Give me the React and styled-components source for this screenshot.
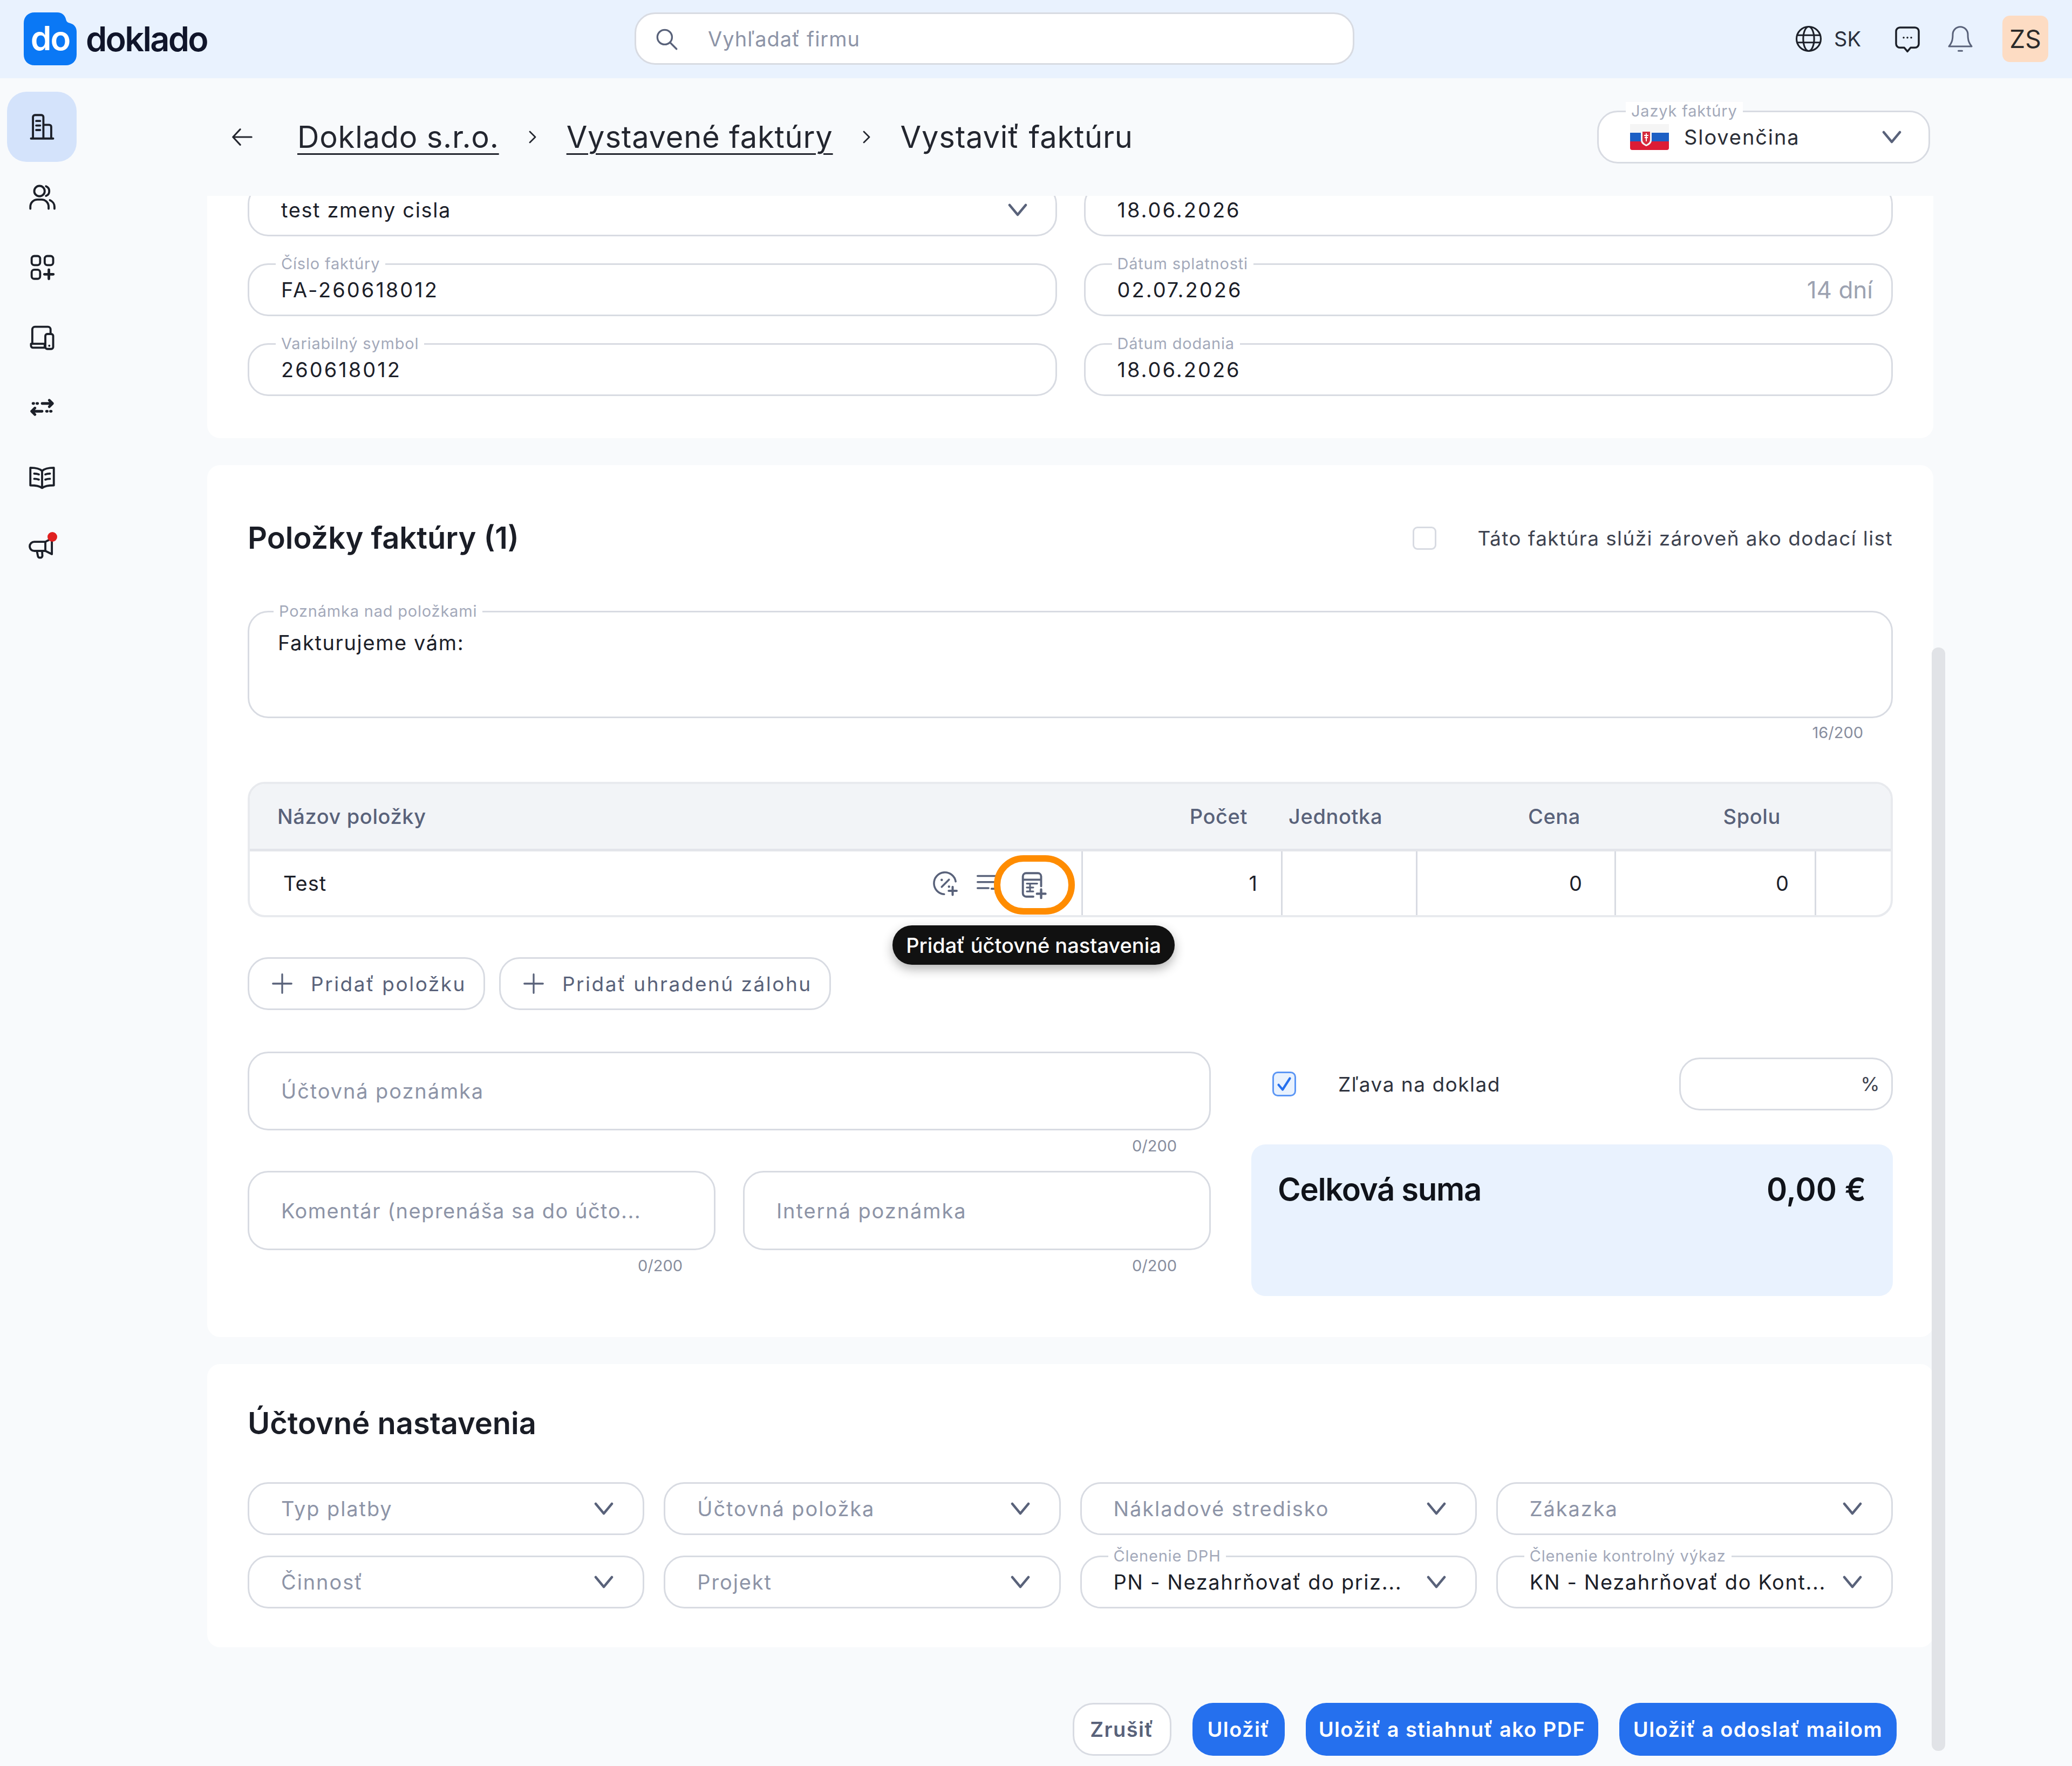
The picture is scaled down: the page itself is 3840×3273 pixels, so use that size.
import styled, { createGlobalStyle } from 'styled-components';

const colors = {
  page: '#f8fafc',
  tint: '#e9f2fe',
  border: '#d8dbe2',
  text: '#1c2029',
  muted: '#59627a',
  placeholder: '#8d94a7',
  label: '#a3a9ba',
  blue: '#2570ee',
};

const GlobalStyle = createGlobalStyle`
  html, body {
    margin: 0;
    background: ${colors.page};
    font-family: 'Inter', 'Noto Sans', sans-serif;
    color: ${colors.text};
  }
  * {
    box-sizing: border-box;
  }
`;

const Page = styled.div`
  position: relative;
  width: 3840px;
  height: 3273px;
  overflow: hidden;
  background: ${colors.page};
`;

const Header = styled.header`
  display: flex;
  align-items: center;
  height: 145px;
  padding: 0 44px 2px;
  background: ${colors.tint};
`;

const LogoWrap = styled.div`
  display: flex;
  align-items: center;
  gap: 17px;
  width: 1132px;
`;

const LogoMark = styled.div`
  position: relative;
  display: flex;
  align-items: center;
  justify-content: center;
  width: 98px;
  height: 98px;
  color: #ffffff;
  font-size: 62px;
  font-weight: 600;
  letter-spacing: -2px;
  & > svg {
    position: absolute;
    inset: 0;
  }
  & > span {
    position: relative;
    top: -1px;
  }
`;

const LogoText = styled.span`
  font-size: 63px;
  font-weight: 600;
  letter-spacing: -2.7px;
  color: #10152a;
`;

const Search = styled.div`
  display: flex;
  align-items: center;
  width: 1334px;
  height: 97px;
  padding-left: 31px;
  gap: 52px;
  background: #ffffff;
  border: 3px solid ${colors.border};
  border-radius: 38px;
  font-size: 38px;
  letter-spacing: 1px;
  color: ${colors.placeholder};
`;

const HeaderRight = styled.div`
  display: flex;
  align-items: center;
  margin-left: auto;
`;

const LangText = styled.span`
  margin: 0 58px 0 20px;
  font-size: 38px;
  color: #2a2f3c;
`;

const BellSlot = styled.div`
  display: flex;
  margin-left: 42px;
`;

const Avatar = styled.div`
  display: flex;
  align-items: center;
  justify-content: center;
  width: 85px;
  height: 86px;
  margin-left: 50px;
  background: #fddcc3;
  border-radius: 14px;
  font-size: 46px;
  color: #2a2a2a;
`;

const Body = styled.div`
  display: flex;
`;

const Sidebar = styled.nav`
  display: flex;
  flex-direction: column;
  flex: none;
  width: 155px;
  padding: 25px 0 0 13px;
`;

const SideItem = styled.div`
  position: relative;
  display: flex;
  align-items: center;
  justify-content: center;
  width: 129px;
  height: 130px;
  border-radius: 36px;
  background: ${({ $active }) => ($active ? '#d4e3fb' : 'transparent')};
  color: #1c2029;
`;

const RedDot = styled.span`
  position: absolute;
  top: 36px;
  left: 75px;
  width: 18px;
  height: 18px;
  border-radius: 50%;
  background: #e02020;
`;

const Main = styled.main`
  flex: 1;
  padding-left: 229px;
  padding-right: 257px;
`;

const TopBar = styled.div`
  display: flex;
  align-items: center;
  height: 218px;
  padding-left: 42px;
  font-size: 56px;
  color: #23262f;
`;

const BackIcon = styled.div`
  display: flex;
  width: 125px;
`;

const CrumbLink = styled.a`
  text-decoration: underline;
  text-decoration-thickness: 3px;
  text-underline-offset: 10px;
  letter-spacing: 0.8px;
`;

const CrumbSep = styled.span`
  display: flex;
  justify-content: center;
  width: 125px;
`;

const CrumbCurrent = styled.span`
  letter-spacing: 0.8px;
`;

const Card = styled.section`
  margin-bottom: 50px;
  padding: ${({ $pad }) => $pad};
  background: #ffffff;
  border-radius: 24px;
`;

const TopCard = styled(Card)`
  height: 449px;
  overflow: hidden;
  border-radius: 0 0 24px 24px;
`;

const TopGrid = styled.div`
  display: grid;
  grid-template-columns: repeat(2, 1fr);
  gap: 50px;
  margin-top: -23px;
`;

const Field = styled.div`
  position: relative;
  display: flex;
  justify-content: ${({ $top }) => ($top ? 'flex-start' : 'space-between')};
  align-items: ${({ $top }) => ($top ? 'flex-start' : 'center')};
  height: ${({ $h }) => $h || 98}px;
  padding-top: ${({ $top }) => ($top ? 33 : 0)}px;
  padding-left: ${({ $indent }) => $indent || 59}px;
  padding-right: ${({ $right }) => $right || 34}px;
  background: #ffffff;
  border: 3px solid ${colors.border};
  border-radius: 38px;
`;

const FieldLabel = styled.label`
  position: absolute;
  top: -19px;
  left: ${({ $indent }) => ($indent || 59) - 10}px;
  padding: 0 10px;
  background: #ffffff;
  font-size: 29px;
  line-height: 34px;
  letter-spacing: 0.8px;
  color: ${colors.label};
`;

const Value = styled.span`
  font-size: 38px;
  letter-spacing: ${({ $num }) => ($num ? 3 : 1.6)}px;
  white-space: nowrap;
  color: ${colors.text};
`;

const Placeholder = styled(Value)`
  letter-spacing: ${({ $tight }) => ($tight ? 1.5 : 1.9)}px;
  color: ${colors.placeholder};
`;

const DueHint = styled.span`
  font-size: 44px;
  color: #9ca2b1;
`;

const SectionHead = styled.div`
  display: flex;
  align-items: center;
  justify-content: space-between;
  height: 100px;
`;

const SectionTitle = styled.h2`
  margin: 0;
  font-size: 56px;
  font-weight: 600;
  color: #1a1d26;
`;

const CheckRow = styled.label`
  display: flex;
  align-items: center;
  gap: 76px;
  font-size: 37px;
  letter-spacing: 1.4px;
  color: #3e4350;
`;

const EmptyBox = styled.span`
  width: 44px;
  height: 43px;
  border: 3px solid ${colors.border};
  border-radius: 9px;
`;

const TickBox = styled.span`
  display: flex;
  align-items: center;
  justify-content: center;
  width: 44px;
  height: 46px;
  background: ${colors.tint};
  border: 3px solid #5b96f5;
  border-radius: 10px;
  color: ${colors.blue};
`;

const NoteSpacer = styled.div`
  height: 85px;
`;

const Counter = styled.div`
  height: 34px;
  margin: ${({ $m }) => $m || '10px 0 0'};
  padding-right: ${({ $r }) => $r}px;
  font-size: 29px;
  line-height: 34px;
  text-align: right;
  color: #878d9e;
`;

const TableWrap = styled.div`
  position: relative;
  margin-top: 74px;
`;

const Table = styled.div`
  background: #ffffff;
  border: 4px solid #e8eaee;
  border-radius: 32px;
  overflow: hidden;
`;

const TableGrid = styled.div`
  display: grid;
  grid-template-columns: 1544px 370px 250px 368px 371px 1fr;
  align-items: stretch;
`;

const HeadRow = styled(TableGrid)`
  height: 125px;
  background: #f2f4f7;
  border-bottom: 5px solid #e3e5ea;
`;

const HeadCell = styled.div`
  display: flex;
  align-items: center;
  justify-content: ${({ $left }) => ($left ? 'flex-start' : 'flex-end')};
  padding: ${({ $pad }) => $pad};
  font-size: 38px;
  font-weight: 500;
  letter-spacing: 0.6px;
  color: ${colors.muted};
`;

const BodyRow = styled(TableGrid)`
  height: 118px;
`;

const NameCell = styled.div`
  position: relative;
  display: flex;
  align-items: center;
  padding: 0 145px 0 62px;
  border-right: 3px solid ${colors.border};
  font-size: 38px;
  letter-spacing: 1px;
`;

const RowIcons = styled.div`
  display: flex;
  align-items: center;
  gap: 26px;
  margin-left: auto;
  color: ${colors.muted};
`;

const Highlight = styled.div`
  position: absolute;
  top: 7px;
  right: 12px;
  display: flex;
  align-items: center;
  justify-content: center;
  width: 150px;
  height: 110px;
  padding-right: 5px;
  background: #ffffff;
  border: 12px solid #ff8c00;
  border-radius: 56px;
  color: ${colors.muted};
`;

const NumCell = styled.div`
  display: flex;
  align-items: center;
  justify-content: flex-end;
  padding-right: ${({ $r }) => $r || 0}px;
  border-right: ${({ $last }) => ($last ? 'none' : `3px solid ${colors.border}`)};
  font-size: 38px;
`;

const Tooltip = styled.div`
  position: absolute;
  top: 266px;
  left: 1195px;
  display: flex;
  align-items: center;
  justify-content: center;
  width: 523px;
  height: 73px;
  background: #111111;
  border-radius: 36px;
  box-shadow: 0 8px 20px rgba(0, 0, 0, 0.3);
  font-size: 38px;
  font-weight: 500;
  color: #ffffff;
  white-space: nowrap;
`;

const AddRow = styled.div`
  display: flex;
  gap: 26px;
  margin-top: 74px;
`;

const AddButton = styled.button`
  display: flex;
  align-items: center;
  gap: 30px;
  height: 98px;
  padding: 0 32px 0 38px;
  background: #ffffff;
  border: 3px solid ${colors.border};
  border-radius: 38px;
  font-family: inherit;
  font-size: 37px;
  letter-spacing: 2.5px;
  color: ${colors.muted};
`;

const NotesGrid = styled.div`
  display: grid;
  grid-template-columns: 1785px 1fr;
  gap: 77px;
  margin-top: 77px;
`;

const NotePair = styled.div`
  display: grid;
  grid-template-columns: repeat(2, 1fr);
  gap: 51px;
`;

const DiscountRow = styled.div`
  display: flex;
  align-items: center;
  margin-top: 11px;
  padding-left: 37px;
  font-size: 37px;
  letter-spacing: 1.5px;
`;

const PercentField = styled.div`
  display: flex;
  align-items: center;
  justify-content: flex-end;
  width: 396px;
  height: 98px;
  margin-left: auto;
  padding-right: 20px;
  border: 3px solid ${colors.border};
  border-radius: 38px;
  font-size: 36px;
  color: #3e4350;
`;

const DiscountLabel = styled.span`
  margin-left: 78px;
  color: #2e323d;
`;

const Summary = styled.div`
  display: flex;
  justify-content: space-between;
  height: 281px;
  margin-top: 63px;
  margin-left: -2px;
  padding: 48px 50px 48px 49px;
  background: ${colors.tint};
  border-radius: 26px;
  font-size: 58px;
  font-weight: 600;
  color: #10131a;
`;

const SummaryLabel = styled.span`
  letter-spacing: -1.3px;
`;

const SelectGrid = styled.div`
  display: grid;
  grid-template-columns: repeat(4, 1fr);
  gap: 38px 36px;
  margin-top: 59px;
`;

const Footer = styled.div`
  display: flex;
  justify-content: flex-end;
  gap: 39px;
  margin-top: 103px;
  padding-right: 68px;
`;

const FooterButton = styled.button`
  width: ${({ $w }) => $w}px;
  height: 98px;
  padding: 0;
  background: ${({ $ghost }) => ($ghost ? '#ffffff' : colors.blue)};
  border: ${({ $ghost }) => ($ghost ? `3px solid ${colors.border}` : 'none')};
  border-radius: 38px;
  font-family: inherit;
  font-size: 38px;
  font-weight: 600;
  letter-spacing: 1.4px;
  color: ${({ $ghost }) => ($ghost ? colors.muted : '#ffffff')};
  white-space: nowrap;
`;

const ScrollThumb = styled.div`
  position: absolute;
  top: 1200px;
  left: 3580px;
  width: 25px;
  height: 2045px;
  background: #e1e3e7;
  border-radius: 12px;
`;

const LangSelect = styled(Field)`
  width: 617px;
  margin-left: auto;
  margin-right: 6px;
`;

const LangValue = styled.div`
  display: flex;
  align-items: center;
  gap: 28px;
  font-size: 38px;
  letter-spacing: 1.9px;
  color: #2a2d36;
`;

const Svg = ({ size = 58, children, ...rest }) => (
  <svg
    width={size}
    height={size}
    viewBox="0 0 24 24"
    fill="none"
    stroke="currentColor"
    strokeWidth="1.6"
    strokeLinecap="round"
    strokeLinejoin="round"
    {...rest}
  >
    {children}
  </svg>
);

const Chevron = () => (
  <svg width="36" height="24" viewBox="0 0 36 24" fill="none" stroke="#59627a" strokeWidth="4.5" strokeLinecap="round" strokeLinejoin="round">
    <path d="M3 3l15 18L33 3" />
  </svg>
);

const LogoShape = () => (
  <svg width="98" height="98" viewBox="0 0 98 98">
    <path d="M20 0h42c9 0 14 5 16 12 1 5 3 7 8 8 7 2 12 7 12 16v42c0 12-8 20-20 20H20C8 98 0 90 0 78V20C0 8 8 0 20 0z" fill="#0a78f5" />
  </svg>
);

const SlovakFlag = () => (
  <svg width="72" height="48" viewBox="0 0 72 48">
    <rect width="72" height="16" fill="#f5f5f5" />
    <rect y="16" width="72" height="16" fill="#1c5fc4" />
    <path d="M0 32h72v12a4 4 0 0 1-4 4H4a4 4 0 0 1-4-4z" fill="#dc1c35" />
    <path d="M20 12h20v18c0 6-5 9-10 11-5-2-10-5-10-11z" fill="#f5f5f5" />
    <path d="M23 14h14v15c0 5-4 7-7 9-3-2-7-4-7-9z" fill="#d52b3e" />
    <path d="M30 17v15M26 21h8M27 25h6" stroke="#fff" strokeWidth="2" />
  </svg>
);

const sideIcons = [
  <Svg key="company">
    <path d="M3.500 21h17M5 21V4.500A1.500 1.500 0 0 1 6.500 3h5A1.500 1.500 0 0 1 13 4.500V21M13 10.500h4.500A1.500 1.500 0 0 1 19 12v9M7.500 7.500h3M7.500 11h3M7.500 14.500h3" />
  </Svg>,
  <Svg key="people">
    <circle cx="10" cy="7.500" r="4" />
    <path d="M15 3.800a4 4 0 0 1 0 7.400M3 21v-1.500A5.500 5.500 0 0 1 8.500 14h3a5.500 5.500 0 0 1 5.500 5.500V21M18 14.500a5.500 5.500 0 0 1 3.500 5V21" />
  </Svg>,
  <Svg key="apps">
    <rect x="4" y="3.500" width="6.500" height="7" rx="2" />
    <rect x="14" y="3.500" width="6.500" height="7" rx="2" />
    <rect x="4" y="14" width="6.500" height="7" rx="2" />
    <path d="M17.200 14v7M13.800 17.500h6.800" strokeWidth="2" />
  </Svg>,
  <Svg key="devices">
    <path d="M4.500 17V6a2 2 0 0 1 2-2h10a2 2 0 0 1 2 2v3M3.500 17H14v3H5a1.500 1.500 0 0 1-1.500-1.500z" />
    <rect x="14.500" y="9.500" width="6" height="11.500" rx="1.500" />
    <path d="M17.500 18.500h.01" />
  </Svg>,
  <Svg key="transfers">
    <path d="M5 9h.6M8 9h.6M12 9h8M17.500 6.500L20 9l-2.500 2.500" strokeWidth="2" />
    <path d="M19 15h-.6M16 15h-.6M12 15H4M6.500 12.500L4 15l2.500 2.500" strokeWidth="2" />
  </Svg>,
  <Svg key="book">
    <path d="M12 20C10 18.500 7 18 3 18V4.500c4 0 7 .5 9 2.500 2-2 5-2.500 9-2.500V18c-4 0-7 .5-9 2zM12 7v13" />
    <path d="M6 9c1.300 0 2.500.2 3.500.6M6 13c1.300 0 2.500.2 3.500.6M18 9c-1.300 0-2.500.2-3.500.6M18 13c-1.300 0-2.500.2-3.500.6" />
  </Svg>,
  <Svg key="megaphone">
    <path d="M6 7.500h8.500l5-2.500v12l-5-2.500H6a3.500 3.500 0 0 1 0-7zM14.500 7.500v7M8 14.500l.8 4a1.500 1.500 0 0 0 1.500 1.200h.4a1.500 1.500 0 0 0 1.500-1.700L12 14.500" />
  </Svg>,
];

const topFields = [
  { value: 'test zmeny cisla', select: true },
  { value: '18.06.2026', num: true },
  { label: 'Číslo faktúry', value: 'FA-260618012', num: true },
  { label: 'Dátum splatnosti', value: '02.07.2026', hint: '14 dní', num: true },
  { label: 'Variabilný symbol', value: '260618012', num: true },
  { label: 'Dátum dodania', value: '18.06.2026', num: true },
];

const accountingSelects = [
  { placeholder: 'Typ platby' },
  { placeholder: 'Účtovná položka' },
  { placeholder: 'Nákladové stredisko' },
  { placeholder: 'Zákazka' },
  { placeholder: 'Činnosť' },
  { placeholder: 'Projekt' },
  { label: 'Členenie DPH', value: 'PN - Nezahrňovať do priz...' },
  { label: 'Členenie kontrolný výkaz', value: 'KN - Nezahrňovať do Kont...' },
];

function App() {
  return (
    <Page>
      <GlobalStyle />
      <Header>
        <LogoWrap>
          <LogoMark>
            <LogoShape />
            <span>do</span>
          </LogoMark>
          <LogoText>doklado</LogoText>
        </LogoWrap>
        <Search>
          <Svg size={50} stroke="#59627a">
            <circle cx="10.500" cy="10.500" r="6.500" />
            <path d="M15.500 15.500L21 21" />
          </Svg>
          Vyhľadať firmu
        </Search>
        <HeaderRight>
          <Svg size={54} strokeWidth="1.4" stroke="#1c2029">
            <circle cx="12" cy="12" r="10" />
            <ellipse cx="12" cy="12" rx="4.500" ry="10" />
            <path d="M2.500 9h19M2.500 15h19" />
          </Svg>
          <LangText>SK</LangText>
          <Svg size={56} stroke="#1c2029" strokeWidth="1.5">
            <path d="M6 3h12a3 3 0 0 1 3 3v10a3 3 0 0 1-3 3h-3.500L12 22l-2.500-3H6a3 3 0 0 1-3-3V6a3 3 0 0 1 3-3z" />
            <path d="M9 11h.01M12 11h.01M15 11h.01" />
          </Svg>
          <BellSlot>
            <Svg size={56} stroke="#59627a" strokeWidth="1.3">
              <path d="M12 2.500a6 6 0 0 1 6 6c0 5 1 7 3 9.500H3c2-2.500 3-4.500 3-9.500a6 6 0 0 1 6-6zM10.500 21.500h3" />
            </Svg>
          </BellSlot>
          <Avatar>ZS</Avatar>
        </HeaderRight>
      </Header>
      <Body>
        <Sidebar>
          {sideIcons.map((icon, index) => (
            <SideItem key={icon.key} $active={index === 0}>
              {icon}
              {index === 6 && <RedDot />}
            </SideItem>
          ))}
        </Sidebar>
        <Main>
          <TopBar>
            <BackIcon>
              <Svg size={46} stroke="#23262f" strokeWidth="1.6">
                <path d="M21 12H3M10 4.500L3 12l7 7.500" />
              </Svg>
            </BackIcon>
            <CrumbLink>Doklado s.r.o.</CrumbLink>
            <CrumbSep>
              <Svg size={30} stroke="#23262f" strokeWidth="2.200">
                <path d="M8 4l8 8-8 8" />
              </Svg>
            </CrumbSep>
            <CrumbLink>Vystavené faktúry</CrumbLink>
            <CrumbSep>
              <Svg size={30} stroke="#23262f" strokeWidth="2.200">
                <path d="M8 4l8 8-8 8" />
              </Svg>
            </CrumbSep>
            <CrumbCurrent>Vystaviť faktúru</CrumbCurrent>
            <LangSelect $right={50} $indent={58}>
              <FieldLabel $indent={60}>Jazyk faktúry</FieldLabel>
              <LangValue>
                <SlovakFlag />
                Slovenčina
              </LangValue>
              <Chevron />
            </LangSelect>
          </TopBar>

          <TopCard $pad="0 75px">
            <TopGrid>
              {topFields.map((field) => (
                <Field key={field.value + field.label} $right={field.select ? 52 : 34}>
                  {field.label && <FieldLabel>{field.label}</FieldLabel>}
                  <Value $num={field.num}>{field.value}</Value>
                  {field.select && <Chevron />}
                  {field.hint && <DueHint>{field.hint}</DueHint>}
                </Field>
              ))}
            </TopGrid>
          </TopCard>

          <Card $pad="85px 75px 76px">
            <SectionHead>
              <SectionTitle>Položky faktúry (1)</SectionTitle>
              <CheckRow>
                <EmptyBox />
                Táto faktúra slúži zároveň ako dodací list
              </CheckRow>
            </SectionHead>
            <NoteSpacer />
            <Field $h={199} $top $indent={53}>
              <FieldLabel $indent={55}>Poznámka nad položkami</FieldLabel>
              <Value>Fakturujeme vám:</Value>
            </Field>
            <Counter $r={55}>16/200</Counter>

            <TableWrap>
              <Table>
                <HeadRow>
                  <HeadCell $left $pad="0 0 0 51px">Názov položky</HeadCell>
                  <HeadCell $pad="0 65px 0 0">Počet</HeadCell>
                  <HeadCell $left $pad="0 0 0 11px">Jednotka</HeadCell>
                  <HeadCell $pad="0 66px 0 0">Cena</HeadCell>
                  <HeadCell $pad="0 66px 0 0">Spolu</HeadCell>
                  <HeadCell />
                </HeadRow>
                <BodyRow>
                  <NameCell>
                    Test
                    <RowIcons>
                      <Svg size={54}>
                        <path d="M20.500 10.500A9 9 0 1 0 11 21M9 15l6-6" />
                        <path d="M9 9.200h.01M15 14.800h.01" strokeWidth="2" />
                        <path d="M18 15v6.500M14.800 18.200h6.500" strokeWidth="1.800" />
                      </Svg>
                      <Svg size={54}>
                        <path d="M3 6h17M3 11h15M3 16h9" />
                        <path d="M18 13v7M14.500 16.500h7" />
                      </Svg>
                    </RowIcons>
                    <Highlight>
                      <Svg size={58}>
                        <path d="M12 21H6.500A2.500 2.500 0 0 1 4 18.500v-13A2.500 2.500 0 0 1 6.500 3h9A2.500 2.500 0 0 1 18 5.500V13M4 8h14" />
                        <path d="M7 11h8M7 14h5M7 17h5M9.500 11v6" strokeWidth="1.300" />
                        <path d="M18 15.500v6.500M14.800 18.800h6.500" strokeWidth="1.800" />
                      </Svg>
                    </Highlight>
                  </NameCell>
                  <NumCell $r={44}>1</NumCell>
                  <NumCell />
                  <NumCell $r={60}>0</NumCell>
                  <NumCell $r={48}>0</NumCell>
                  <NumCell $last />
                </BodyRow>
              </Table>
              <Tooltip>Pridať účtovné nastavenia</Tooltip>
            </TableWrap>

            <AddRow>
              <AddButton>
                <Svg size={46} strokeWidth="1.700"><path d="M12 3v18M3 12h18" /></Svg>
                Pridať položku
              </AddButton>
              <AddButton>
                <Svg size={46} strokeWidth="1.700"><path d="M12 3v18M3 12h18" /></Svg>
                Pridať uhradenú zálohu
              </AddButton>
            </AddRow>

            <NotesGrid>
              <div>
                <Field $h={146}>
                  <Placeholder>Účtovná poznámka</Placeholder>
                </Field>
                <Counter $r={63} $m="12px 0 29px">0/200</Counter>
                <NotePair>
                  <div>
                    <Field $h={147}>
                      <Placeholder $tight>Komentár (neprenáša sa do účto...</Placeholder>
                    </Field>
                    <Counter $r={61} $m="12px 0 0">0/200</Counter>
                  </div>
                  <div>
                    <Field $h={147}>
                      <Placeholder>Interná poznámka</Placeholder>
                    </Field>
                    <Counter $r={63} $m="12px 0 0">0/200</Counter>
                  </div>
                </NotePair>
              </div>
              <div>
                <DiscountRow>
                  <TickBox>
                    <Svg size={36} strokeWidth="2.800"><path d="M5 13l5 6 9-14" /></Svg>
                  </TickBox>
                  <DiscountLabel>Zľava na doklad</DiscountLabel>
                  <PercentField>%</PercentField>
                </DiscountRow>
                <Summary>
                  <SummaryLabel>Celková suma</SummaryLabel>
                  <span>0,00 €</span>
                </Summary>
              </div>
            </NotesGrid>
          </Card>

          <Card $pad="60px 75px 72px">
            <SectionHead>
              <SectionTitle>Účtovné nastavenia</SectionTitle>
            </SectionHead>
            <SelectGrid>
              {accountingSelects.map((item) => (
                <Field key={item.placeholder || item.label} $right={54}>
                  {item.label && <FieldLabel>{item.label}</FieldLabel>}
                  {item.value ? <Value>{item.value}</Value> : <Placeholder>{item.placeholder}</Placeholder>}
                  <Chevron />
                </Field>
              ))}
            </SelectGrid>
          </Card>

          <Footer>
            <FooterButton $ghost $w={183}>Zrušiť</FooterButton>
            <FooterButton $w={171}>Uložiť</FooterButton>
            <FooterButton $w={542}>Uložiť a stiahnuť ako PDF</FooterButton>
            <FooterButton $w={514}>Uložiť a odoslať mailom</FooterButton>
          </Footer>
        </Main>
      </Body>
      <ScrollThumb />
    </Page>
  );
}

export default App;
